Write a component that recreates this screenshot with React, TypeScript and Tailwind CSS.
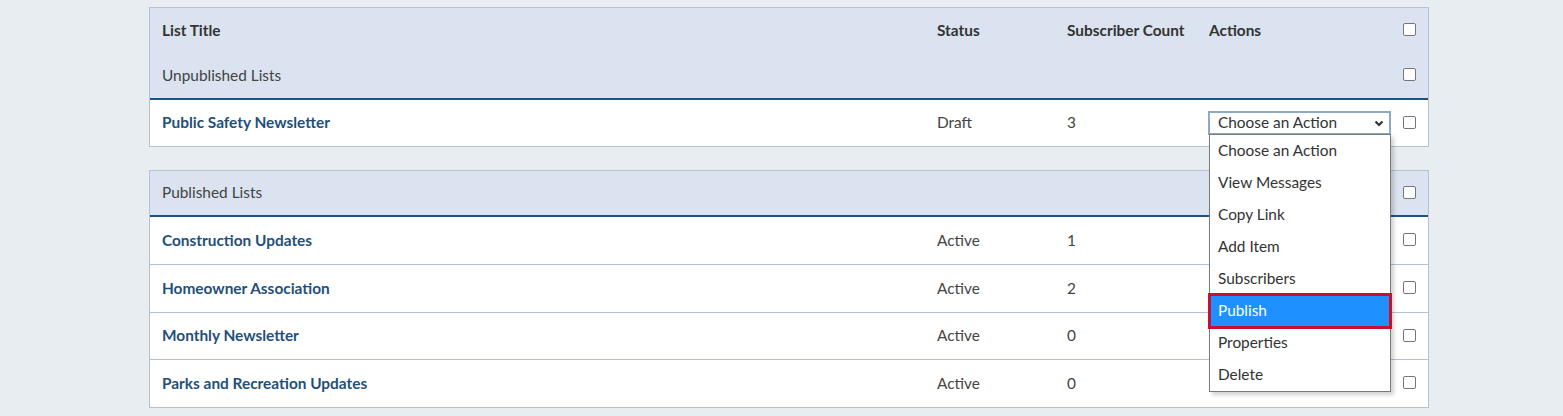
import React from 'react';

const cols = 'grid grid-cols-[775px_130px_142px_194px_1fr] items-center';

const actions = ['Choose an Action', 'View Messages', 'Copy Link', 'Add Item', 'Subscribers', 'Publish', 'Properties', 'Delete'];

const published = [
    { title: 'Construction Updates', status: 'Active', count: 1 },
    { title: 'Homeowner Association', status: 'Active', count: 2 },
    { title: 'Monthly Newsletter', status: 'Active', count: 0 },
    { title: 'Parks and Recreation Updates', status: 'Active', count: 0 },
];

function Box() {
    return <span className="block w-[13px] h-[13px] -mt-[2px] rounded-[2px] border border-[#767676] bg-white" />;
}

function ActionSelect() {
    return (
        <div className="relative">
            <div className="flex items-center justify-between w-[183px] h-[24px] border-2 border-[#8ea9c8] bg-white pl-[8px] pr-[4px] text-[#333] -ml-[1px]">
                <span>Choose an Action</span>
                <svg width="12" height="12" viewBox="0 0 12 12" className="text-[#333]">
                    <path d="M2.5 4.5 L6 8 L9.5 4.5" fill="none" stroke="currentColor" strokeWidth="2.2" />
                </svg>
            </div>
            {/* open dropdown */}
            <div className="absolute left-0 top-[23px] z-10 w-[182px] border border-[#7a7a7a] bg-white shadow-[3px_3px_4px_rgba(0,0,0,0.18)]">
                {actions.map((a) => (
                    <div
                        key={a}
                        className={
                            a === 'Publish'
                                ? 'h-[32px] flex items-center pl-[8px] bg-[#1e90ff] text-white outline-3 outline-[#c8102e] -outline-offset-1'
                                : 'h-[32px] flex items-center pl-[8px] text-[#333]'
                        }
                    >
                        {a}
                    </div>
                ))}
            </div>
        </div>
    );
}

export default function App() {
    return (
        <div className="min-h-[416px] bg-[#e8edf2] pt-[7px] font-['Lato','Liberation_Sans',sans-serif] text-[15.4px]">
            {/* Unpublished */}
            <div className="ml-[149px] w-[1280px] border border-[#b4c3d4] bg-white">
                <div className={`${cols} h-[45px] bg-[#dae3ef] font-bold text-[#333] pl-[12px]`}>
                    <span>List Title</span>
                    <span>Status</span>
                    <span>Subscriber Count</span>
                    <span>Actions</span>
                    <Box />
                </div>
                <div className={`${cols} h-[47px] bg-[#dae3ef] text-[#444] pl-[12px] border-b-2 border-[#1c5282]`}>
                    <span>Unpublished Lists</span>
                    <span />
                    <span />
                    <span />
                    <Box />
                </div>
                <div className={`${cols} h-[46px] pl-[12px] text-[#444]`}>
                    <span className="font-bold text-[#1f4f7b]">Public Safety Newsletter</span>
                    <span>Draft</span>
                    <span>3</span>
                    <ActionSelect />
                    <Box />
                </div>
            </div>

            {/* Published */}
            <div className="ml-[149px] w-[1280px] mt-[23px] border border-[#b4c3d4] bg-white">
                <div className={`${cols} h-[46px] bg-[#dae3ef] text-[#444] pl-[12px] border-b-2 border-[#1c5282]`}>
                    <span>Published Lists</span>
                    <span />
                    <span />
                    <span />
                    <Box />
                </div>
                {published.map((row, i) => (
                    <div
                        key={row.title}
                        className={`${cols} pl-[12px] text-[#444] ${i > 0 ? 'border-t border-[#b4c3d4]' : ''} ${i % 2 ? 'h-[48px]' : 'h-[47px]'}`}
                    >
                        <span className="font-bold text-[#1f4f7b]">{row.title}</span>
                        <span>{row.status}</span>
                        <span>{row.count}</span>
                        <span />
                        <Box />
                    </div>
                ))}
            </div>
        </div>
    );
}
